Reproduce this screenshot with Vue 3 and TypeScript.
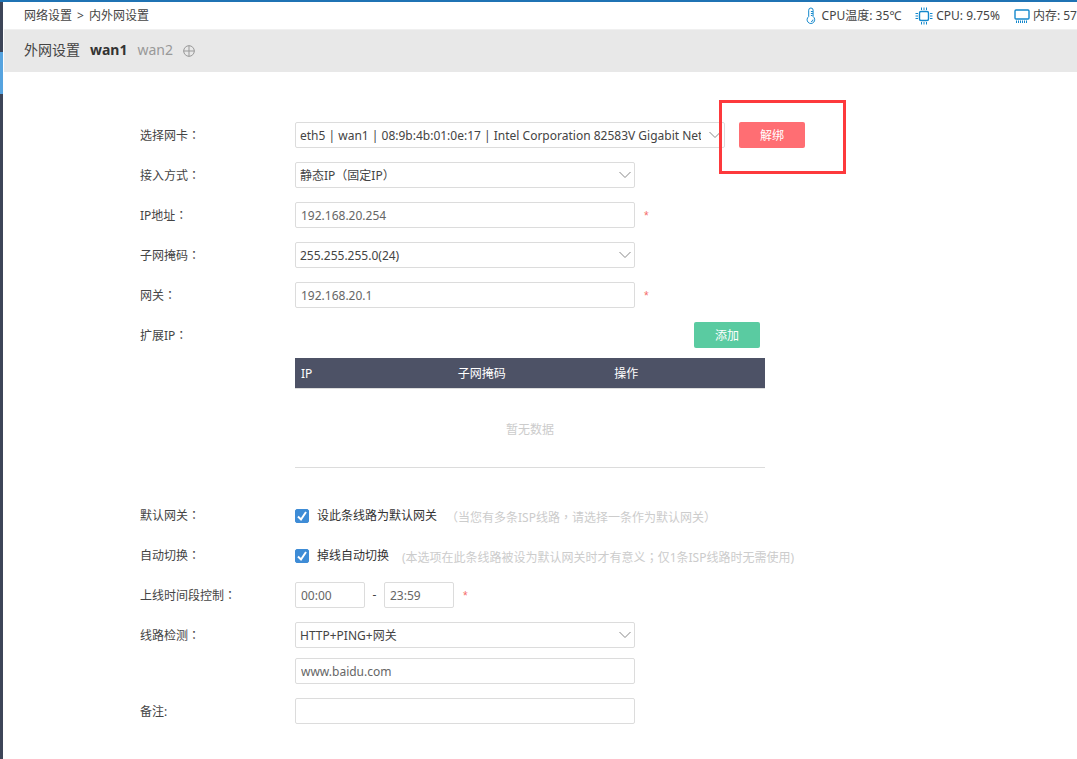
<script setup lang="ts">
import { ref } from 'vue'

const nic = ref('eth5 | wan1 | 08:9b:4b:01:0e:17 | Intel Corporation 82583V Gigabit Network')
const mode = ref('静态IP（固定IP）')
const ip = ref('192.168.20.254')
const mask = ref('255.255.255.0(24)')
const gateway = ref('192.168.20.1')
const isDefault = ref(true)
const autoSwitch = ref(true)
const timeFrom = ref('00:00')
const timeTo = ref('23:59')
const check = ref('HTTP+PING+网关')
const host = ref('www.baidu.com')
const remark = ref('')
const columns: string[] = ['IP', '子网掩码', '操作']
</script>

<template>
  <div class="page">
    <aside class="rail"><span class="rail-active"></span></aside>
    <div class="content">
      <header class="top">
        <nav class="crumbs">
          <a href="#">网络设置</a><span class="sep">&gt;</span><a href="#">内外网设置</a>
        </nav>
        <ul class="stats">
          <li>
            <svg width="10" height="18" viewBox="0 0 10 18" fill="none" stroke="#1488cc">
              <path d="M2.7 9.6V3.2a2.2 2.2 0 0 1 4.4 0v6.4a3.8 3.8 0 1 1-4.4 0z" />
              <path d="M4.9 4.5h2M4.9 6.5h2M4.9 8.5h1.500M7 12.6a2 2 0 0 1-1.9 2" />
            </svg>
            <span class="temp">CPU温度: 35℃</span>
          </li>
          <li>
            <svg width="18" height="18" viewBox="0 0 18 18" fill="none" stroke="#1488cc">
              <rect x="4.5" y="4.5" width="9" height="9" rx="1.5" stroke-width="1.4" />
              <path d="M6.5 0.5v2.5M9 0.5v2.5M11.500 0.500v2.500M6.500 15v2.500M9 15v2.500M11.500 15v2.500M0.500 6.500h2.500M0.500 9h2.500M0.500 11.500h2.500M15 6.500h2.500M15 9h2.500M15 11.500h2.500" />
            </svg>
            <span>CPU: 9.75%</span>
          </li>
          <li>
            <svg width="16" height="14" viewBox="0 0 16 14" fill="none" stroke="#1488cc">
              <rect x="1" y="1" width="14" height="9" rx="1" stroke-width="1.4" />
              <path d="M2.5 11.500v2.500M4.500 11.500v2.500M6.500 11.500v2.500M8.500 11.500v2.500M10.500 11.500v2.500M12.500 11.500v2.500" />
            </svg>
            <span>内存: 57</span>
          </li>
        </ul>
      </header>

      <div class="tabs">
        <h1>外网设置</h1>
        <button type="button" class="tab active">wan1</button>
        <button type="button" class="tab">wan2</button>
        <button type="button" class="tab add" aria-label="+">
          <svg width="12" height="12" viewBox="0 0 12 12" fill="none" stroke="#999">
            <circle cx="6" cy="6" r="5.3" />
            <path d="M6 0.500v11M0.500 6h11" />
          </svg>
        </button>
      </div>

      <form class="form" @submit.prevent>
        <div class="row">
          <label class="name" for="nic">选择网卡<i>：</i></label>
          <div class="field">
            <div class="select wide">
              <select id="nic" v-model="nic"><option>{{ nic }}</option></select>
              <svg class="chev" viewBox="0 0 12 8"><path d="M0.500 1L6 6.500L11.500 1" /></svg>
            </div>
            <div class="marked">
              <button type="button" class="btn danger">解绑</button>
              <span class="mark"></span>
            </div>
          </div>
        </div>
        <div class="row">
          <label class="name" for="mode">接入方式<i>：</i></label>
          <div class="field">
            <div class="select">
              <select id="mode" v-model="mode"><option>{{ mode }}</option></select>
              <svg class="chev" viewBox="0 0 12 8"><path d="M0.500 1L6 6.500L11.500 1" /></svg>
            </div>
          </div>
        </div>
        <div class="row">
          <label class="name" for="ip">IP地址<i>：</i></label>
          <div class="field"><input id="ip" v-model="ip" type="text" class="text" /><span class="req">*</span></div>
        </div>
        <div class="row">
          <label class="name" for="mask">子网掩码<i>：</i></label>
          <div class="field">
            <div class="select">
              <select id="mask" v-model="mask"><option>{{ mask }}</option></select>
              <svg class="chev" viewBox="0 0 12 8"><path d="M0.500 1L6 6.500L11.500 1" /></svg>
            </div>
          </div>
        </div>
        <div class="row">
          <label class="name" for="gateway">网关<i>：</i></label>
          <div class="field"><input id="gateway" v-model="gateway" type="text" class="text" /><span class="req">*</span></div>
        </div>
        <div class="row ext">
          <span class="name">扩展IP<i>：</i></span>
          <div class="ext-body">
            <button type="button" class="btn ok">添加</button>
            <table>
              <thead>
                <tr><th v-for="c in columns" :key="c" scope="col">{{ c }}</th></tr>
              </thead>
              <tbody>
                <tr><td :colspan="columns.length">暂无数据</td></tr>
              </tbody>
            </table>
          </div>
        </div>
        <div class="row">
          <span class="name">默认网关<i>：</i></span>
          <div class="field">
            <label class="check">
              <span class="box">
                <input v-model="isDefault" type="checkbox" />
                <svg viewBox="0 0 14 14"><path d="M3 7.500L6 10.500L11 3" /></svg>
              </span>
              设此条线路为默认网关
            </label>
            <span class="hint first"><i>（</i>当您有多条ISP线路<i>，</i>请选择一条作为默认网关<i>）</i></span>
          </div>
        </div>
        <div class="row">
          <span class="name">自动切换<i>：</i></span>
          <div class="field">
            <label class="check">
              <span class="box">
                <input v-model="autoSwitch" type="checkbox" />
                <svg viewBox="0 0 14 14"><path d="M3 7.500L6 10.500L11 3" /></svg>
              </span>
              掉线自动切换
            </label>
            <span class="hint">(本选项在此条线路被设为默认网关时才有意义<i>；</i>仅1条ISP线路时无需使用)</span>
          </div>
        </div>
        <div class="row">
          <label class="name" for="from">上线时间段控制<i>：</i></label>
          <div class="field">
            <input id="from" v-model="timeFrom" type="text" class="text time" />
            <label class="dash" for="to">-</label>
            <input id="to" v-model="timeTo" type="text" class="text time" />
            <span class="req">*</span>
          </div>
        </div>
        <div class="row">
          <label class="name" for="check">线路检测<i>：</i></label>
          <div class="field stack">
            <div class="select">
              <select id="check" v-model="check"><option>{{ check }}</option></select>
              <svg class="chev" viewBox="0 0 12 8"><path d="M0.500 1L6 6.500L11.500 1" /></svg>
            </div>
            <input v-model="host" type="text" class="text" aria-labelledby="check" />
          </div>
        </div>
        <div class="row">
          <label class="name" for="remark">备注:</label>
          <div class="field"><input id="remark" v-model="remark" type="text" class="text" /></div>
        </div>
      </form>
    </div>
  </div>
</template>

<style>
body {
  margin: 0;
  background: #fff;
}
</style>

<style scoped>
.page {
  display: flex;
  min-height: 100vh;
  box-sizing: border-box;
  border-top: 2px solid #1f73b4;
  overflow: hidden;
  color: #444;
  font: 12px/26px 'Noto Sans', 'Noto Sans CJK SC', sans-serif;
}
.page * {
  box-sizing: border-box;
}
button,
input,
select {
  margin: 0;
  font: inherit;
  color: inherit;
}
.rail {
  flex: none;
  width: 3px;
  padding-top: 50px;
  background: #3d4558;
}
.rail-active {
  display: block;
  height: 42px;
  background: #56a3df;
}
.content {
  flex: 1;
  min-width: 0;
}
.top {
  display: flex;
  justify-content: space-between;
  height: 27px;
  padding-left: 21px;
  white-space: nowrap;
}
.crumbs {
  padding-top: 1px;
}
.crumbs a {
  color: inherit;
  text-decoration: none;
}
.sep {
  margin: 0 5px;
}
.stats {
  display: flex;
  gap: 14px;
  margin: 0;
  padding: 0;
  list-style: none;
}
.stats li {
  display: flex;
  align-items: center;
  gap: 3px;
}
.temp {
  padding-left: 3px;
}
.tabs {
  display: flex;
  align-items: center;
  gap: 10px;
  height: 43px;
  margin-left: 1px;
  padding: 0 0 2px 20px;
  border-top: 1px solid #f0f0f0;
  background: #e8e8e8;
  font-size: 14px;
}
h1 {
  margin: 0;
  font-size: 14px;
  font-weight: 400;
}
.tab {
  padding: 0;
  border: 0;
  background: none;
  color: #999;
}
.tab.active {
  color: #333;
  font-weight: 700;
}
.tab.add {
  display: flex;
  align-items: center;
  padding-top: 2px;
}
.form {
  display: flex;
  flex-direction: column;
  gap: 14px;
  padding: 50px 0 35px 137px;
}
.row {
  display: flex;
}
.name {
  flex: none;
  width: 155px;
  padding-top: 2px;
  line-height: 24px;
}
.name i,
.hint i {
  font-family: 'Noto Sans CJK TC', sans-serif;
  font-style: normal;
  line-height: 0;
}
.field {
  display: flex;
  flex: 1;
  min-width: 0;
}
.stack {
  flex-direction: column;
  gap: 10px;
}
.select {
  position: relative;
  width: 340px;
  height: 26px;
}
.wide {
  width: 430px;
}
select,
.text {
  height: 26px;
  border: 1px solid #dcdcdc;
  border-radius: 2px;
  background: #fff;
  outline: 0;
}
select {
  width: 100%;
  padding: 0 23px 0 4px;
  appearance: none;
}
.text {
  width: 340px;
  padding: 2px 5px 0;
  color: #666;
}
.chev {
  position: absolute;
  top: 9px;
  right: 4px;
  width: 12px;
  height: 8px;
  fill: none;
  stroke: #888;
  pointer-events: none;
}
.req {
  height: 26px;
  margin-left: 9px;
  color: #f56c6c;
  font-family: 'Liberation Sans', sans-serif;
  line-height: 28px;
}
.time {
  width: 70px;
}
.dash {
  width: 19px;
  text-align: center;
}
.btn {
  width: 66px;
  height: 26px;
  padding: 2px 0 0;
  border: 0;
  border-radius: 2px;
  color: #fff;
  line-height: 24px;
}
.danger {
  display: block;
  background: #ff6e73;
}
.ok {
  margin-right: 5px;
  background: #5acba1;
}
.marked {
  position: relative;
  margin-left: 14px;
}
.mark {
  position: absolute;
  top: -22px;
  left: -20px;
  width: 127px;
  height: 74px;
  border: 3px solid #fd393c;
  pointer-events: none;
}
.ext {
  margin-bottom: 20px;
}
.ext-body {
  display: flex;
  flex-direction: column;
  align-items: flex-end;
  gap: 10px;
  width: 470px;
}
table {
  width: 100%;
  border-collapse: separate;
  border-spacing: 0;
  table-layout: fixed;
}
th {
  height: 31px;
  padding: 2px 6px 0;
  border-bottom: 1px solid #dcdcdc;
  background: #4d5266;
  background-clip: padding-box;
  color: #fff;
  font-weight: 400;
  text-align: left;
}
td {
  height: 79px;
  padding: 4px 0 0;
  border-bottom: 1px solid #dcdcdc;
  color: #ccc;
  text-align: center;
}
.check {
  display: flex;
  align-items: center;
  gap: 8px;
  padding-top: 2px;
  color: #333;
  line-height: 24px;
}
.box {
  position: relative;
  width: 14px;
  height: 14px;
}
.box input {
  display: block;
  width: 14px;
  height: 14px;
  border: 1px solid #3e8cd6;
  border-radius: 2px;
  background: #fff;
  appearance: none;
}
.box input:checked {
  background: #3e8cd6;
}
.box svg {
  position: absolute;
  inset: 0;
  fill: none;
  stroke: #fff;
  stroke-width: 2;
  pointer-events: none;
}
.hint {
  margin-left: 13px;
  padding-top: 6px;
  color: #ccc;
  line-height: 20px;
}
.hint.first {
  margin-left: 9px;
}
</style>
